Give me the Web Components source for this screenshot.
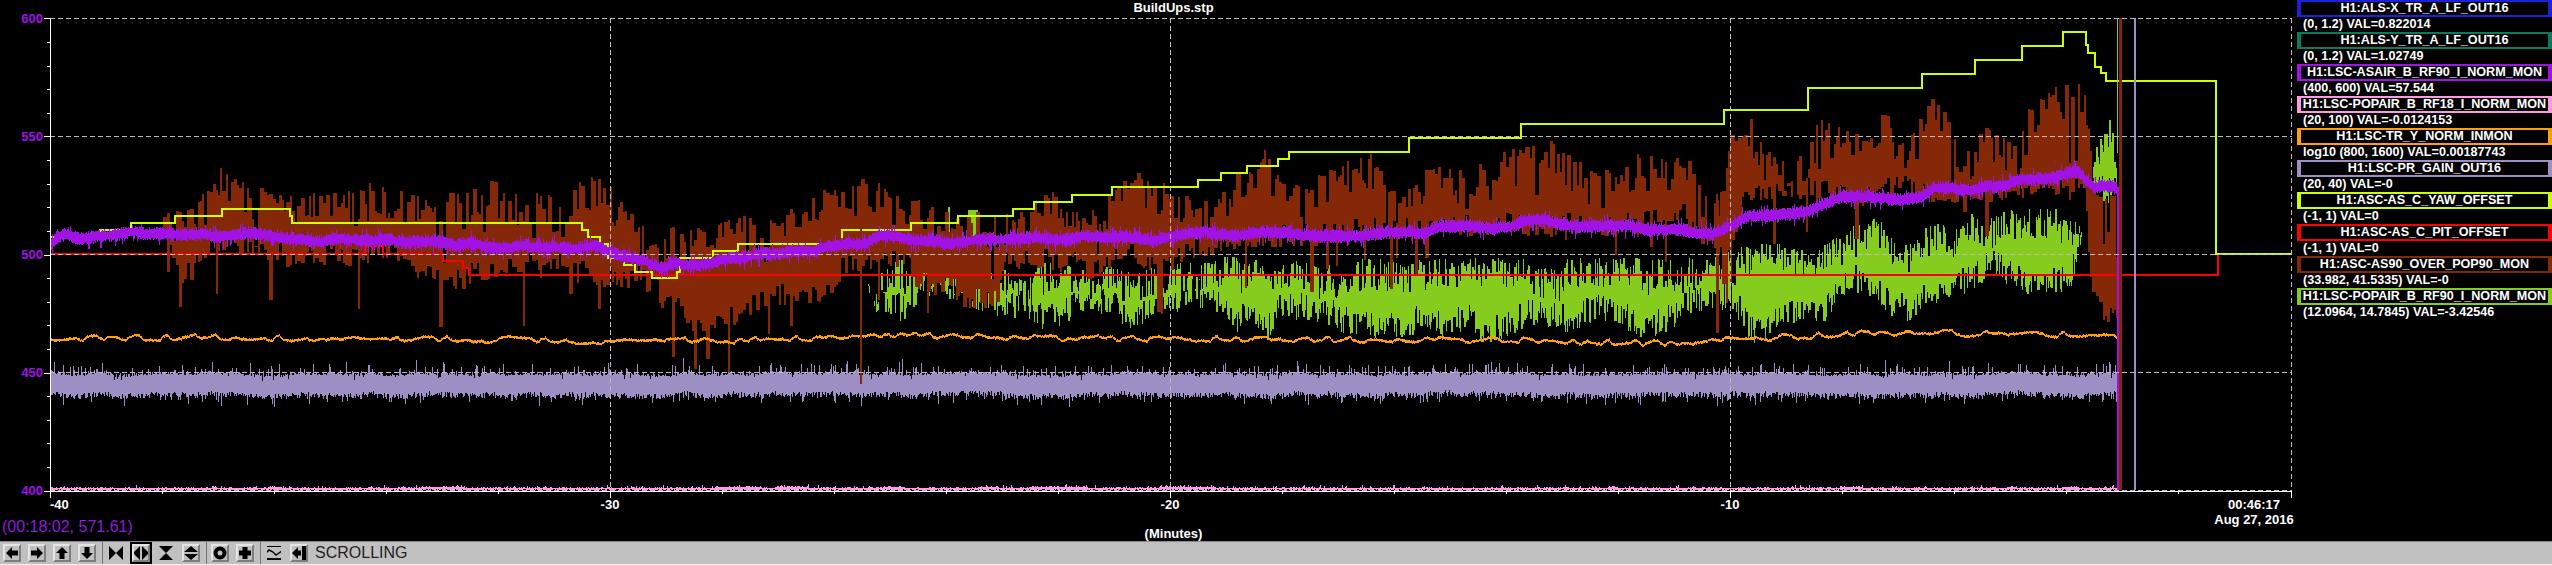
<!DOCTYPE html>
<html><head><meta charset="utf-8"><title>BuildUps.stp</title>
<style>html,body{margin:0;padding:0;background:#000;overflow:hidden}</style></head>
<body>
<template id="t-app"><style>
:host{display:flex;flex-direction:column;width:2552px;height:565px;background:#000;font:bold 13px "Liberation Sans",Arial,sans-serif;color:#fff}
.main{display:flex;height:541px;flex:none}
.bottom{height:1px;background:#f2f2f2;flex:none}
</style><div class="main"><slot name="plot"></slot><slot name="legend"></slot></div><slot name="bar"></slot><div class="bottom"></div></template>

<template id="t-legendpanel"><style>:host{display:flex;flex-direction:column;width:255px;flex:none;margin-left:auto}</style><slot></slot></template>

<template id="t-legend"><style>
:host{display:block;height:32px;box-sizing:border-box;white-space:nowrap;font:bold 12.6px/15px "Liberation Sans",Arial,sans-serif;color:#fff}
.box{box-sizing:border-box;height:17px;border:solid var(--c,#fff);border-width:2px 4px;display:flex;align-items:center;justify-content:center;line-height:13px;overflow:hidden}
.val{padding-left:6px;height:15px}
</style><div class="box"><slot name="name"></slot></div><div class="val"><slot></slot></div></template>

<template id="t-bar"><style>
:host{display:flex;flex:none;align-items:flex-start;gap:7px;box-sizing:border-box;height:23px;background:#c0c0c0;border-top:1px solid #8a8a8a;padding:2px 0 0 3px}
</style><slot></slot></template>

<template id="t-btn"><style>
:host{display:block;flex:none;width:18px;height:18px;box-sizing:border-box;background:#c0c0c0;border:2px solid;border-color:#e4e4e4 #7d7d7d #7d7d7d #e4e4e4}
:host([flat]){border-color:#c0c0c0}
:host([on]){outline:2px solid #000}
svg{display:block;width:14px;height:14px;overflow:visible}
</style><slot></slot></template>

<template id="t-sep"><style>:host{display:block;flex:none;width:1px;height:22px;margin:-2px -3px 0 -1px;background:#777}</style></template>

<template id="t-status"><style>:host{display:block;flex:none;font:16px/18px "Liberation Sans",Arial,sans-serif;color:#222}</style><slot></slot></template>

<script>
function shadow(id){return class extends HTMLElement{constructor(){super();this.attachShadow({mode:'open'}).appendChild(document.getElementById(id).content.cloneNode(true));}}}
customElements.define('strip-app',shadow('t-app'));
customElements.define('legend-panel',shadow('t-legendpanel'));
customElements.define('trace-legend',shadow('t-legend'));
customElements.define('tool-bar',shadow('t-bar'));
customElements.define('tool-btn',shadow('t-btn'));
customElements.define('tool-sep',shadow('t-sep'));
customElements.define('status-text',shadow('t-status'));

function rng(seed){return function(){seed|=0;seed=seed+0x6D2B79F5|0;let t=Math.imul(seed^seed>>>15,1|seed);t=t+Math.imul(t^t>>>7,61|t)^t;return((t^t>>>14)>>>0)/4294967296}}
function lerp(pts,x){if(x<=pts[0][0])return pts[0][1];for(let i=1;i<pts.length;i++){if(x<=pts[i][0]){const a=pts[i-1],b=pts[i];return a[1]+(b[1]-a[1])*(x-a[0])/(b[0]-a[0]||1)}}return pts[pts.length-1][1]}
function slow(r,n,w){const a=[];let v=0,t=0;for(let i=0;i<n;i++){if(i%w==0)t=r()*2-1;v+=(t-v)*(2/w);a.push(v)}return a}

const BROWN_HI=[[163,185],[166,205],[175,205],[200,195],[222,165],[240,180],[265,190],[290,195],[320,190],[345,178],[380,185],[400,190],[440,195],[490,178],[530,192],[560,192],[592,172],[620,195],[640,225],[693,226],[738,217],[795,207],[820,190],[862,175],[905,195],[950,213],[999,210],[1044,187],[1089,213],[1136,160],[1170,187],[1211,200],[1264,143],[1280,170],[1321,170],[1370,150],[1402,183],[1435,160],[1484,163],[1525,137],[1549,140],[1598,173],[1639,153],[1688,160],[1713,193],[1729,133],[1749,117],[1790,167],[1819,117],[1851,133],[1886,107],[1903,140],[1933,80],[1960,137],[1993,125],[2017,147],[2030,98],[2063,82],[2083,85],[2090,140],[2095,195],[2117,195]];
const BROWN_LO=[[163,240],[172,262],[180,290],[195,280],[210,250],[250,252],[300,270],[340,262],[400,262],[430,288],[490,280],[560,272],[600,290],[640,290],[680,320],[703,333],[740,325],[762,307],[815,313],[850,272],[866,268],[905,268],[917,285],[966,310],[980,315],[999,300],[1005,268],[1070,268],[1089,285],[1110,268],[1170,268],[1220,258],[1270,245],[1400,240],[1600,235],[1680,225],[1700,250],[1712,262],[1722,262],[1749,205],[2085,200],[2090,290],[2105,325],[2117,320]];
const GREEN_HI=[[866,270],[901,257],[950,265],[1032,270],[1044,262],[1070,262],[1130,270],[1190,260],[1240,255],[1280,260],[1400,258],[1500,258],[1700,258],[1749,245],[1766,238],[1810,253],[1851,227],[1876,215],[1893,237],[1950,220],[1967,213],[2007,210],[2023,207],[2060,207],[2087,223],[2093,145],[2110,105],[2117,153]];
const GREEN_LO=[[866,295],[873,310],[905,317],[925,300],[966,300],[1028,320],[1048,327],[1089,307],[1138,332],[1170,313],[1211,307],[1252,333],[1269,345],[1280,327],[1321,320],[1372,345],[1427,330],[1484,337],[1525,333],[1606,320],[1639,337],[1672,338],[1692,310],[1729,307],[1749,345],[1810,327],[1851,293],[1892,317],[1933,315],[1993,277],[2030,293],[2070,295],[2087,240],[2093,200],[2117,200]];
const PURPLE=[[50,246],[58,238],[120,233],[160,232],[210,233],[280,237],[340,240],[400,243],[500,247],[600,247],[625,255],[640,262],[664,268],[700,262],[722,260],[783,252],[844,247],[885,237],[926,243],[1048,238],[1150,238],[1252,232],[1280,235],[1402,232],[1541,222],[1647,228],[1713,233],[1749,218],[1810,210],[1839,197],[1920,198],[1933,187],[1975,190],[2027,180],[2077,170],[2093,187],[2117,187]];
const ORANGE=[[50,338],[100,337],[400,338],[640,342],[720,340],[880,335],[1000,337],[1170,339],[1280,339],[1500,340],[1670,343],[1760,338],[1880,332],[2000,334],[2117,335]];
const YEL=[[50,100,237],[100,131,230],[131,175,223],[175,222,216],[222,290,209],[290,292,216],[292,582,223],[582,588,230],[588,600,237],[600,608,244],[608,624,258],[624,635,265],[635,652,272],[652,677,278],[677,680,272],[680,713,258],[713,738,251],[738,842,244],[842,911,230],[911,958,223],[958,1013,216],[1013,1034,209],[1034,1072,202],[1072,1112,195],[1112,1198,187],[1198,1221,180],[1221,1247,173],[1247,1278,166],[1278,1289,159],[1289,1409,152],[1409,1521,138],[1521,1724,124],[1724,1808,110],[1808,1922,88],[1922,1975,74],[1975,2022,60],[2022,2063,46],[2063,2086,32],[2086,2088,45],[2088,2095,53],[2095,2101,67],[2101,2106,73],[2106,2216,81],[2216,2291,254]];
const RED=[[50,365,254],[365,383,246],[383,443,254],[443,463,261],[463,469,268],[469,2218,275]];

function steps(s){let d='M'+s[0][0]+' '+s[0][2];for(const g of s){d+='V'+g[2]+'H'+g[1]}return d}
function col(x,a,b){return 'M'+(x+.5)+' '+Math.round(a)+'V'+Math.round(b)}

class StripPlot extends HTMLElement{
 constructor(){super();const root=this.attachShadow({mode:'open'});
 const W=2297,H=541;
 const mid=[18,136,254,372,490];
 let brown='',green='',purple='',lilac='',orange='',pink='';
 let r=rng(11);
 let sb=slow(r,2200,13),sb2=slow(r,2200,9);
 let hold=0,hi=0,lo=0;
 for(let x=163;x<2117;x++){
  if(hold--<=0){hold=r()<.5?1:r()<.5?2:3;
   hi=lerp(BROWN_HI,x)+38*Math.pow(r(),1.5)+Math.max(0,sb[x]*16);
   lo=lerp(BROWN_LO,x)-22*Math.pow(r(),1.4)+sb2[x]*6;
   const p=(x>866&&x<1750)?.07:.04;
   if(r()<p)lo+=18+38*r();
   if(r()<.04)hi+=25+35*r();
  }
  if(hi<lo)brown+=col(x,hi,lo);
 }
 for(const s of [[1716,1718,333],[1726,1727,303]])for(let x=s[0];x<=s[1];x++)brown+=col(x,200,s[2]);
 let sg=slow(r,2200,21),sg2=slow(r,2200,11);
 hold=0;
 for(let x=866;x<2117;x++){
  if(hold--<=0){hold=r()<.7?0:1;
   hi=lerp(GREEN_HI,x)+32*Math.pow(r(),1.3)+Math.max(0,sg2[x]*14);
   lo=lerp(GREEN_LO,x)-28*Math.pow(r(),1.2)+sg[x]*10;
  }
  if(hi<lo)green+=col(x,hi,lo);
 }
 for(const s of [[948,949,207],[958,959,225],[968,977,210]])for(let x=s[0];x<=s[1];x++)green+=col(x,s[2],262);
 let sp=slow(r,2200,17);
 for(let x=50;x<2117;x++){const c=lerp(PURPLE,x)+sp[x]*3.5;let a=3.5+3.5*r(),b=3.5+3.5*r();if(r()<.16)a+=6*r();if(r()<.16)b+=7*r();purple+=col(x,c-a,c+b)}
 let sl=slow(r,2200,15);
 for(let x=50;x<2117;x++){let a=372.5+3*r()+sl[x]*2-(r()<.3?11*Math.pow(r(),2):0)-(r()<.02?7:0),b=392+6*r()+sl[x]*2+(r()<.25?9*Math.pow(r(),2):0);if(r()<.03)a+=4;lilac+=col(x,a,b)}
 let so=slow(r,2200,7);
 for(let x=50;x<2117;x++){const c=lerp(ORANGE,x)+so[x]*3.5+(r()-.5)*1.2;orange+=col(x,c-1,c+1.5)}
 let sk=slow(r,2200,31);
 for(let x=50;x<2117;x++){let a=487.6-(r()<.3?1:0)-(r()<.05?1.5:0)-(sk[x]>.45?1:0),b=490-(r()<.2?1:0);pink+=col(x,a,b)}
 let ticks='';
 for(let i=0;i<=20;i++){const y=18.3+i*23.62,m=i%5==0;ticks+='M'+(m?44:47)+' '+(Math.round(y)+.5)+'H50'}
 for(let i=0;i<=20;i++){const x=50+i*112,m=i%5==0;ticks+='M'+(x+(i==20?1:0)+.5)+' 491V'+(m?498:494)}
 let hgrid=mid.map(y=>'M50 '+(y+.5)+'H2292').join('');
 let vgrid=[610,1170,1730,2291].map(x=>'M'+(x+.5)+' 18V491').join('');
 const yl=[[18,600],[136,550],[254,500],[372,450],[490,400]].map(a=>`<text class="yl" x="43" y="${a[0]+5}" text-anchor="end">${a[1]}</text>`).join('');
 root.innerHTML=`<style>
 :host{display:block;width:${W}px;height:${H}px;flex:none}
 svg{display:block;font:bold 13px "Liberation Sans",Arial,sans-serif}
 path{fill:none;shape-rendering:crispEdges}
 text{fill:#fff}
 .yl{fill:#a012e6}
 .coord{fill:#8d1cdc;font:16px "Liberation Sans",Arial,sans-serif}
 </style>
 <svg width="${W}" height="${H}" viewBox="0 0 ${W} ${H}">
  <path d="${green}" stroke="#86cc1f"/>
  <path d="${brown}" stroke="#842807"/>
  <path d="${steps(RED)}V254H2291" stroke="#ff0000" stroke-width="2"/>
  <path d="${steps(YEL)}" stroke="#ccff00" stroke-width="2"/>
  <path d="${lilac}" stroke="#9d8fc4"/>
  <path d="${orange}" stroke="#ff9d0a"/>
  <path d="${pink}" stroke="#ff99e5"/>
  <path d="M861 200V384" stroke="#842807" stroke-width="2"/>
  <path d="${purple}" stroke="#a012e6"/>
  <path d="M2117.5 18V153" stroke="#86cc1f"/>
  <path d="M2118 187V490" stroke="#a012e6" stroke-width="3"/>
  <path d="M2120.5 18V490" stroke="#842807" stroke-width="3"/>
  <path d="M2135 18V490" stroke="#9d8fc4" stroke-width="2"/>
  <path d="${hgrid}${vgrid}" stroke="#bdbdbd" stroke-dasharray="5 3"/>
  <path d="M50.5 18V498M50 491.5H2292${ticks}" stroke="#fff"/>
  ${yl}
  <text x="1173.5" y="12" text-anchor="middle">BuildUps.stp</text>
  <text x="50" y="509">-40</text>
  <text x="610" y="509" text-anchor="middle">-30</text>
  <text x="1170" y="509" text-anchor="middle">-20</text>
  <text x="1730" y="509" text-anchor="middle">-10</text>
  <text x="1173.5" y="538" text-anchor="middle">(Minutes)</text>
  <text x="2254" y="509" text-anchor="middle">00:46:17</text>
  <text x="2254" y="524" text-anchor="middle">Aug 27, 2016</text>
  <text class="coord" x="2" y="532">(00:18:02, 571.61)</text>
 </svg>`;
 }
}
customElements.define('strip-plot',StripPlot);
</script>

<strip-app>
 <strip-plot slot="plot"></strip-plot>
 <legend-panel slot="legend">
  <trace-legend style="--c:#1c22dc"><span slot="name">H1:ALS-X_TR_A_LF_OUT16</span>(0, 1.2) VAL=0.822014</trace-legend>
  <trace-legend style="--c:#0a7a5e"><span slot="name">H1:ALS-Y_TR_A_LF_OUT16</span>(0, 1.2) VAL=1.02749</trace-legend>
  <trace-legend style="--c:#a012e6"><span slot="name">H1:LSC-ASAIR_B_RF90_I_NORM_MON</span>(400, 600) VAL=57.544</trace-legend>
  <trace-legend style="--c:#ff99e5"><span slot="name">H1:LSC-POPAIR_B_RF18_I_NORM_MON</span>(20, 100) VAL=-0.0124153</trace-legend>
  <trace-legend style="--c:#ff9d0a"><span slot="name">H1:LSC-TR_Y_NORM_INMON</span>log10 (800, 1600) VAL=0.00187743</trace-legend>
  <trace-legend style="--c:#9d8fc4"><span slot="name">H1:LSC-PR_GAIN_OUT16</span>(20, 40) VAL=-0</trace-legend>
  <trace-legend style="--c:#ccff00"><span slot="name">H1:ASC-AS_C_YAW_OFFSET</span>(-1, 1) VAL=0</trace-legend>
  <trace-legend style="--c:#ff0000"><span slot="name">H1:ASC-AS_C_PIT_OFFSET</span>(-1, 1) VAL=0</trace-legend>
  <trace-legend style="--c:#842807"><span slot="name">H1:ASC-AS90_OVER_POP90_MON</span>(33.982, 41.5335) VAL=-0</trace-legend>
  <trace-legend style="--c:#86cc1f"><span slot="name">H1:LSC-POPAIR_B_RF90_I_NORM_MON</span>(12.0964, 14.7845) VAL=-3.42546</trace-legend>
 </legend-panel>
 <tool-bar slot="bar">
  <tool-btn><svg viewBox="0 0 14 14"><path d="M1 7 7 1V4.500H13V9.500H7V13Z"/></svg></tool-btn>
  <tool-btn><svg viewBox="0 0 14 14"><path d="M13 7 7 1V4.500H1V9.500H7V13Z"/></svg></tool-btn>
  <tool-btn><svg viewBox="0 0 14 14"><path d="M7 1 1 7H4.500V13H9.500V7H13Z"/></svg></tool-btn>
  <tool-btn><svg viewBox="0 0 14 14"><path d="M7 13 1 7H4.500V1H9.500V7H13Z"/></svg></tool-btn>
  <tool-sep></tool-sep>
  <tool-btn flat><svg viewBox="0 0 14 14"><path d="M-2-2 7 7-2 16ZM16-2 7 7 16 16Z"/></svg></tool-btn>
  <tool-btn on><svg viewBox="0 0 14 14"><path d="M6 0-1 7 6 14ZM8 0 15 7 8 14Z"/></svg></tool-btn>
  <tool-btn flat><svg viewBox="0 0 14 14"><path d="M-2-2H16L7 7ZM-2 16H16L7 7Z"/></svg></tool-btn>
  <tool-btn><svg viewBox="0 0 14 14"><path d="M7 0 14 6H0ZM0 8H14L7 14Z"/></svg></tool-btn>
  <tool-sep></tool-sep>
  <tool-btn><svg viewBox="0 0 14 14"><circle cx="7" cy="7" r="4.500" fill="none" stroke="#000" stroke-width="4"/></svg></tool-btn>
  <tool-btn><svg viewBox="0 0 14 14"><path d="M4.500 1H9.500V4.500H13V9.500H9.500V13H4.500V9.500H1V4.500H4.500Z"/></svg></tool-btn>
  <tool-sep></tool-sep>
  <tool-btn flat><svg viewBox="0 0 14 14"><path d="M-2-2H16V1H-2ZM-2 12H16V16H-2Z"/><path d="M-1 7 2 4 6 6 9 9 12 7 15 5" fill="none" stroke="#000" stroke-width="1.500"/></svg></tool-btn>
  <tool-btn><svg viewBox="0 0 14 14"><path d="M0 7 6 1V4.500H9V9.500H6V13ZM10 0H14V14H10Z"/></svg></tool-btn>
  <status-text>SCROLLING</status-text>
 </tool-bar>
</strip-app>
</body></html>
